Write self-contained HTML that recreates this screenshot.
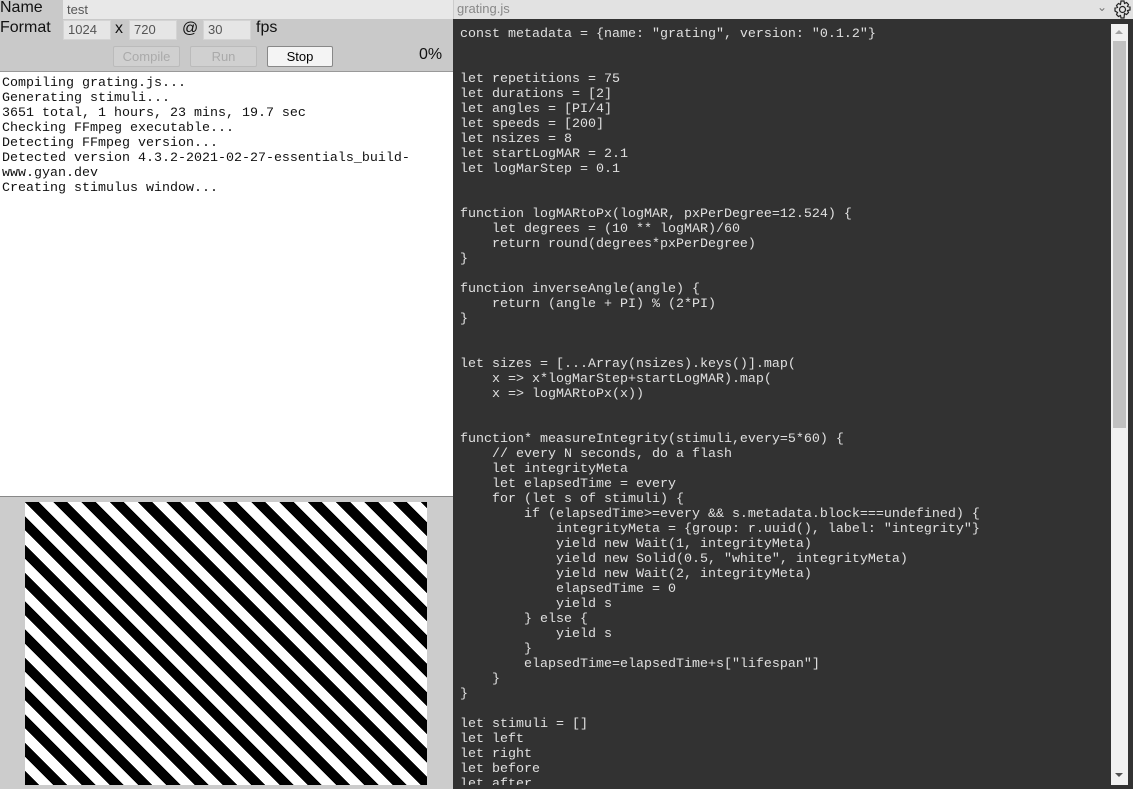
<!DOCTYPE html>
<html><head><style>
*{margin:0;padding:0;box-sizing:border-box}
body{width:1133px;height:789px;overflow:hidden;background:#cccccc;font-family:"Liberation Sans",Arial,sans-serif;position:relative}
.abs{position:absolute}
.lbl{font-size:16px;color:#111}
.inp{background:#e6e6e6;border:1px solid #d4d4d4;font-size:13px;color:#555;padding-left:4px;line-height:18px;height:20px}
.btn{border:1px solid #bbb;border-radius:2px;font-size:13px;color:#aaa;text-align:center;line-height:19px;height:21px;background:#d0d0d0}
pre{font-family:"Liberation Mono","Courier New",monospace;font-size:13.33px;line-height:15px}
</style></head><body>
<div class="abs" style="left:0;top:0;width:453px;height:72px;background:#c9c9c9"></div>
<div class="abs lbl" style="left:0;top:-1px">Name</div>
<div class="abs inp" style="left:63px;top:0;width:390px;height:19px;border:none;background:#e8e8e8;line-height:19px">test</div>
<div class="abs lbl" style="left:0;top:19px">Format</div>
<div class="abs inp" style="left:63px;top:20px;width:48px">1024</div>
<div class="abs lbl" style="left:115px;top:20px">x</div>
<div class="abs inp" style="left:129px;top:20px;width:48px">720</div>
<div class="abs lbl" style="left:182px;top:20px">@</div>
<div class="abs inp" style="left:203px;top:20px;width:48px">30</div>
<div class="abs lbl" style="left:256px;top:19px">fps</div>
<div class="abs btn" style="left:113px;top:46px;width:67px">Compile</div>
<div class="abs btn" style="left:190px;top:46px;width:67px">Run</div>
<div class="abs btn" style="left:267px;top:46px;width:66px;background:#f4f4f4;border-color:#888;color:#000">Stop</div>
<div class="abs lbl" style="left:419px;top:46px">0%</div>
<div class="abs" style="left:0;top:71px;width:453px;height:426px;background:#fff;border-top:1px solid #999;border-bottom:1px solid #888">
<pre style="padding:4px 0 0 2px;color:#111">Compiling grating.js...
Generating stimuli...
3651 total, 1 hours, 23 mins, 19.7 sec
Checking FFmpeg executable...
Detecting FFmpeg version...
Detected version 4.3.2-2021-02-27-essentials_build-
www.gyan.dev
Creating stimulus window...</pre></div>
<div class="abs" style="left:25px;top:502px;width:402px;height:283px;background:repeating-linear-gradient(45deg,#000 0 10px,#fff 10px 20px)"></div>
<div class="abs" style="left:453px;top:0;width:680px;height:19px;background:#e2e2e2;border-left:1px solid #ccc"></div>
<div class="abs" style="left:457px;top:1px;font-size:13px;color:#888">grating.js</div>
<div class="abs" style="left:1097px;top:0px;font-size:12px;color:#777">&#8964;</div>
<svg class="abs" style="left:1112px;top:0" width="21" height="19" viewBox="0 0 21 19"><g fill="none" stroke="#222" stroke-width="1.2"><path d="M9 1h3l.5 2.5 2-1 2 2-1 2 2.5.5v3l-2.5.5 1 2-2 2-2-1L12 18H9l-.5-2.5-2 1-2-2 1-2L3 11V8l2.5-.5-1-2 2-2 2 1z"/><circle cx="10.5" cy="9.5" r="3"/></g></svg>
<div class="abs" style="left:453px;top:19px;width:680px;height:770px;background:#323232"></div>
<div class="abs" style="left:1111px;top:24px;width:17px;height:761px;background:#f1f1f1"></div>
<div class="abs" style="left:1113px;top:41px;width:13px;height:387px;background:#c1c1c1"></div>
<div class="abs" style="left:1115px;top:30px;width:0;height:0;border-left:4px solid transparent;border-right:4px solid transparent;border-bottom:4px solid #a3a3a3"></div>
<div class="abs" style="left:1115px;top:773px;width:0;height:0;border-left:4px solid transparent;border-right:4px solid transparent;border-top:4px solid #505050"></div>
<div class="abs" style="left:453px;top:19px;width:656px;height:766px;overflow:hidden">
<pre style="padding:8px 0 0 7px;color:#e0e0e0">const metadata = {name: "grating", version: "0.1.2"}


let repetitions = 75
let durations = [2]
let angles = [PI/4]
let speeds = [200]
let nsizes = 8
let startLogMAR = 2.1
let logMarStep = 0.1


function logMARtoPx(logMAR, pxPerDegree=12.524) {
    let degrees = (10 ** logMAR)/60
    return round(degrees*pxPerDegree)
}

function inverseAngle(angle) {
    return (angle + PI) % (2*PI)
}


let sizes = [...Array(nsizes).keys()].map(
    x =&gt; x*logMarStep+startLogMAR).map(
    x =&gt; logMARtoPx(x))


function* measureIntegrity(stimuli,every=5*60) {
    // every N seconds, do a flash
    let integrityMeta
    let elapsedTime = every
    for (let s of stimuli) {
        if (elapsedTime&gt;=every &amp;&amp; s.metadata.block===undefined) {
            integrityMeta = {group: r.uuid(), label: "integrity"}
            yield new Wait(1, integrityMeta)
            yield new Solid(0.5, "white", integrityMeta)
            yield new Wait(2, integrityMeta)
            elapsedTime = 0
            yield s
        } else {
            yield s
        }
        elapsedTime=elapsedTime+s["lifespan"]
    }
}

let stimuli = []
let left
let right
let before
let after</pre></div>
</body></html>
